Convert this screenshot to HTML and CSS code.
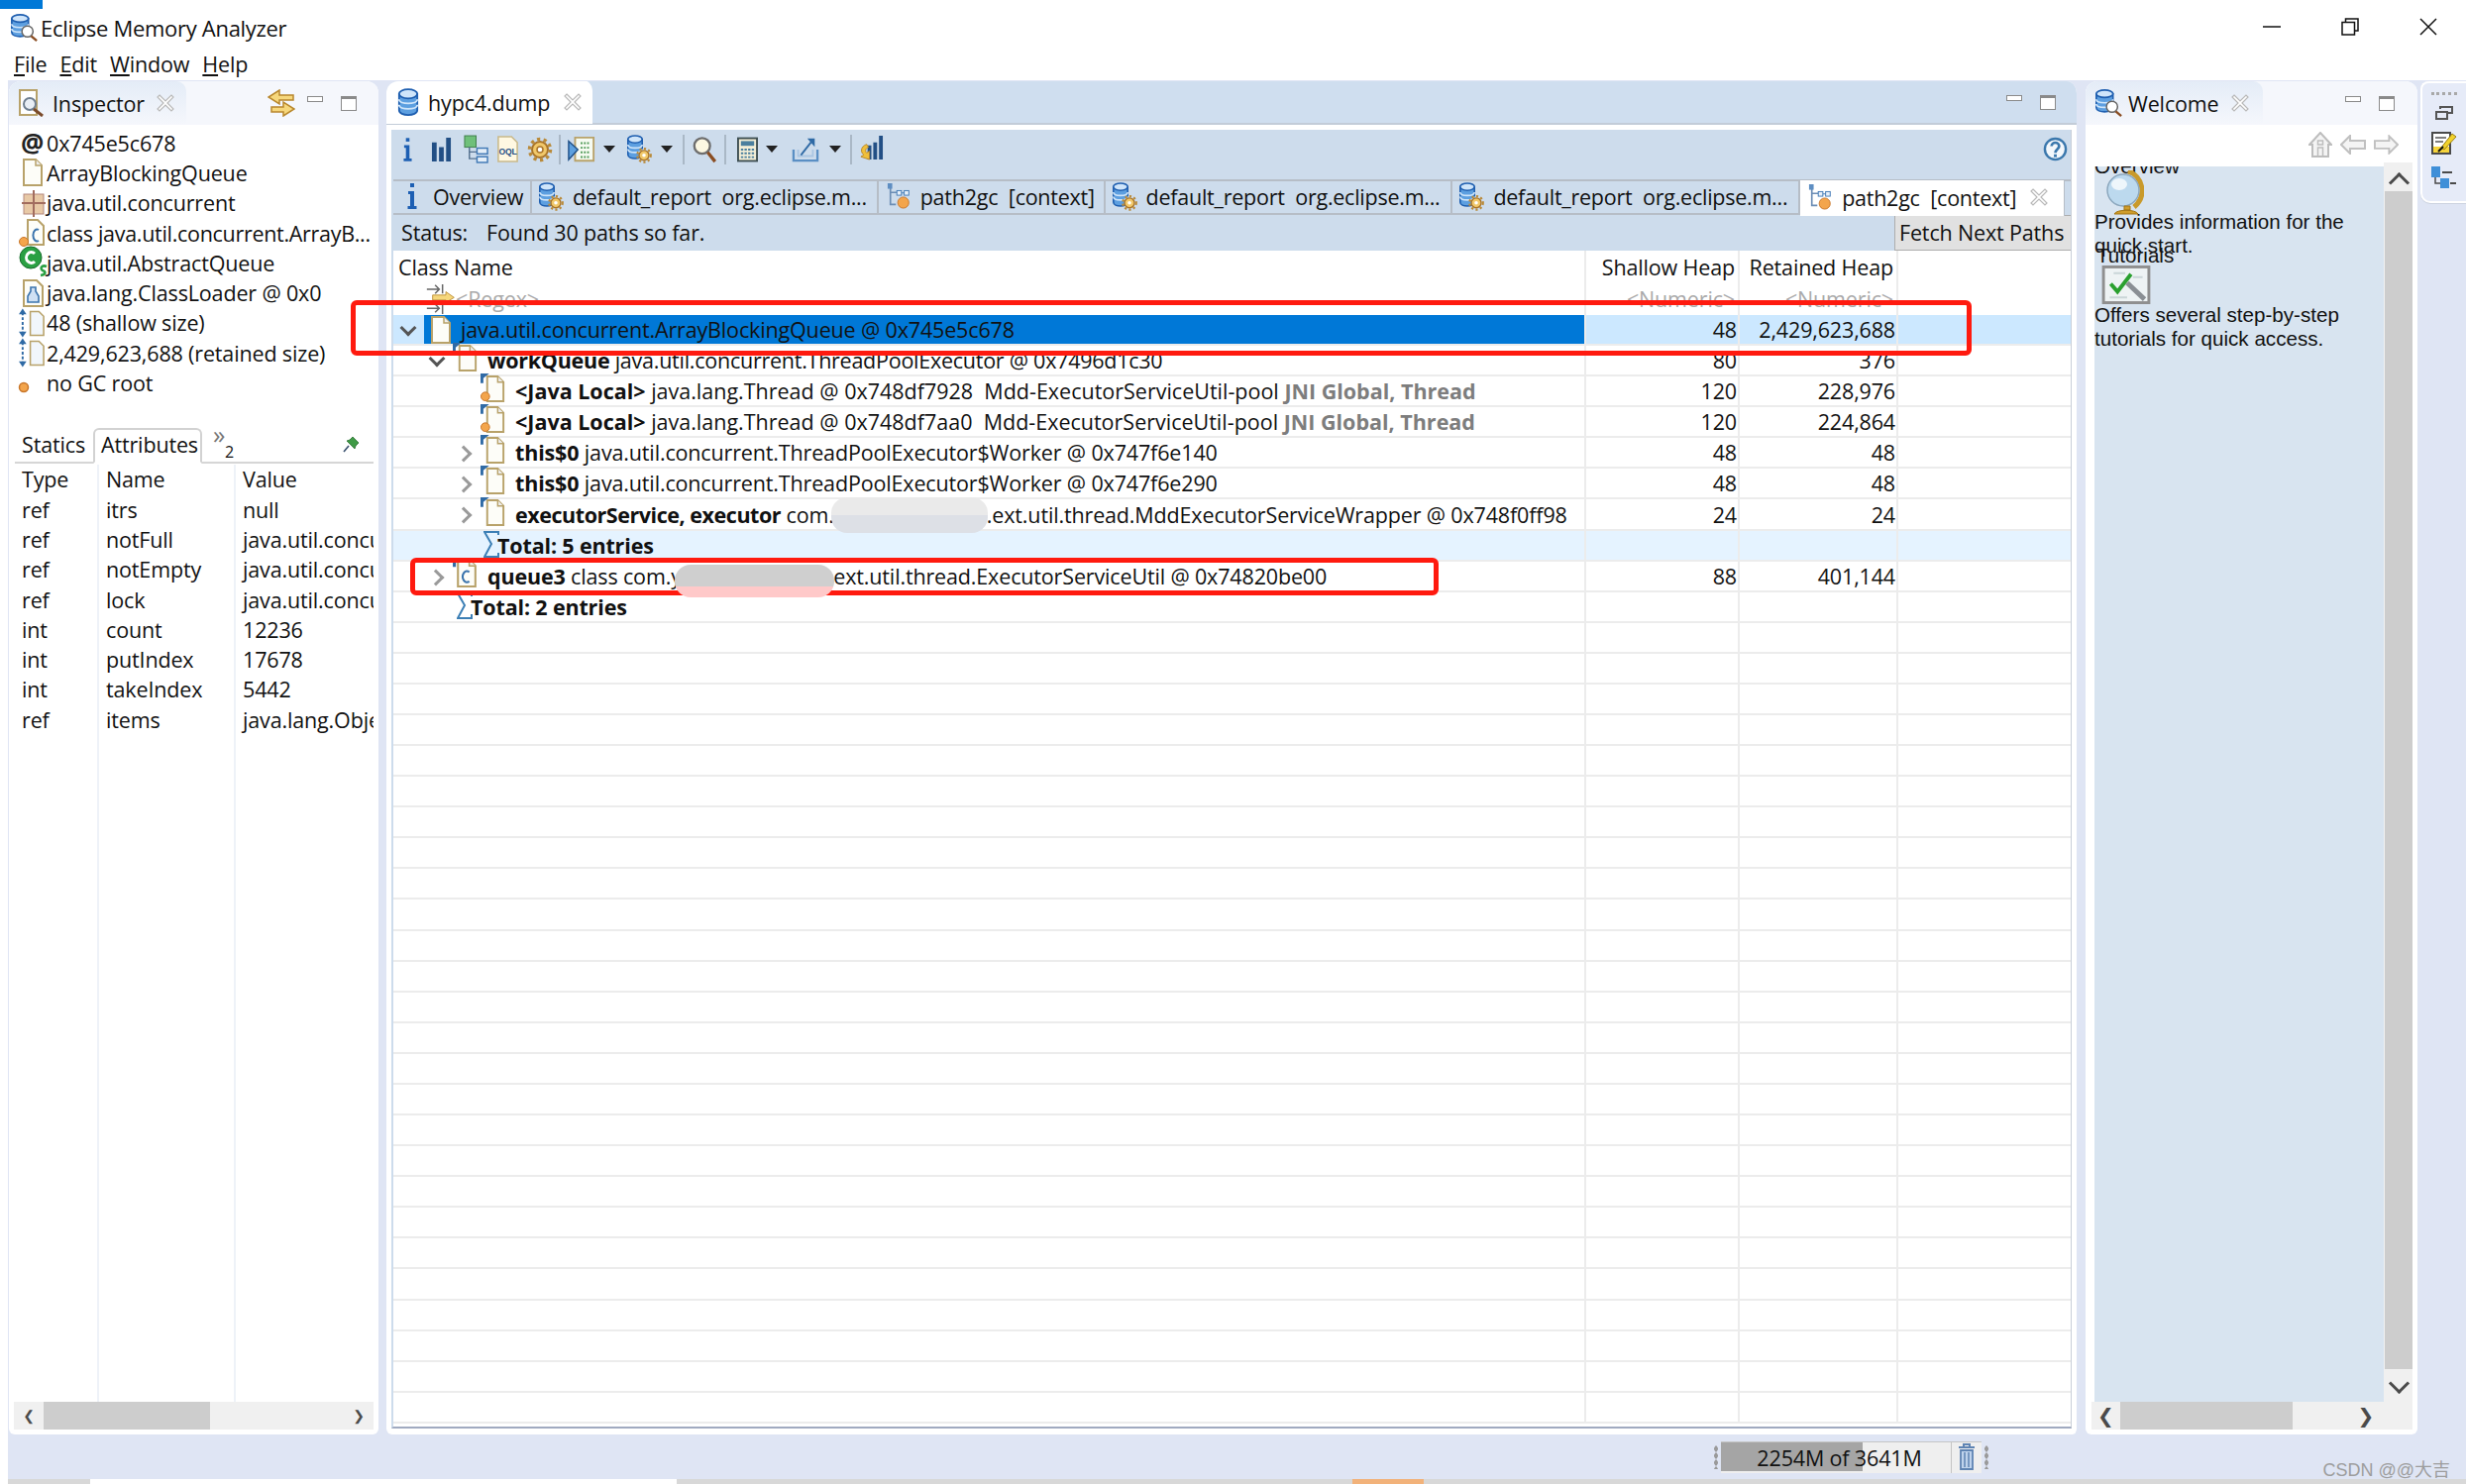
FILE: index.html
```html
<!DOCTYPE html>
<html lang="en">
<head>
<meta charset="utf-8">
<title>Eclipse Memory Analyzer</title>
<link rel="stylesheet" href="styles.css">
</head>
<body>
<svg class="defs" width="0" height="0">
  <symbol id="doc" viewBox="0 0 22 28"><path d="M2 1H14L20 7V27H2Z" fill="#fdfdf8" stroke="#b8a26a" stroke-width="2"/><path d="M14 1V7H20" fill="#eee" stroke="#b8a26a" stroke-width="1.5"/></symbol>
  <symbol id="doctag" viewBox="0 0 28 30"><path d="M7 3H18L24 9V29H7Z" fill="#fdfdf8" stroke="#b8a26a" stroke-width="2"/><path d="M18 3V9H24" fill="#eee" stroke="#b8a26a" stroke-width="1.5"/><path d="M0 0H9L3 5V10H0Z" fill="#2f6aa5"/></symbol>
  <symbol id="doclocal" viewBox="0 0 28 30"><path d="M7 3H18L24 9V29H7Z" fill="#fdfdf8" stroke="#b8a26a" stroke-width="2"/><path d="M18 3V9H24" fill="#eee" stroke="#b8a26a" stroke-width="1.5"/><path d="M0 0H9L3 5V10H0Z" fill="#2f6aa5"/><circle cx="5" cy="24" r="4.5" fill="#f3a54c" stroke="#c8762a"/></symbol>
  <symbol id="classdoc" viewBox="0 0 26 28"><path d="M5 1H16L22 7V27H5Z" fill="#fdfdf8" stroke="#b8a26a" stroke-width="2"/><path d="M16 1V7H22" fill="#eee" stroke="#b8a26a" stroke-width="1.5"/><path d="M0 0H8L3 4V8H0Z" fill="#2f6aa5"/><path d="M16 13A4 5.5 0 1 0 16 22" fill="none" stroke="#3b74ad" stroke-width="2"/></symbol>
  <symbol id="classstatic" viewBox="0 0 28 28"><path d="M9 1H19L25 7V26H9Z" fill="#fdfdf8" stroke="#b8a26a" stroke-width="2"/><path d="M20 11A4 6 0 1 0 20 22" fill="none" stroke="#3b74ad" stroke-width="2"/><circle cx="5" cy="23" r="4.5" fill="#f3a54c" stroke="#c8762a"/></symbol>
  <symbol id="pkg" viewBox="0 0 24 28"><rect x="2" y="5" width="20" height="20" fill="#e8c9a6" stroke="#b3877c"/><path d="M12 1V28M0 14H24" stroke="#a26d5f" stroke-width="2"/></symbol>
  <symbol id="greenc" viewBox="0 0 30 34"><circle cx="12" cy="12" r="11" fill="#2aa043" stroke="#166b2a"/><path d="M16 8A5 5.5 0 1 0 16 16" fill="none" stroke="#fff" stroke-width="3"/><path d="M28 21C23 19 21 23 24 25C27 26 28 29 22 30" fill="none" stroke="#2aa043" stroke-width="2.6"/></symbol>
  <symbol id="loader" viewBox="0 0 24 28"><path d="M2 1H15L21 7V27H2Z" fill="#fdfdf8" stroke="#b8a26a" stroke-width="2"/><path d="M9 8H14V12L17 17V23H6V17L9 12Z" fill="#cfe0f3" stroke="#3b74ad" stroke-width="1.6"/></symbol>
  <symbol id="size" viewBox="0 0 28 30"><path d="M4 4V26" stroke="#2f6aa5" stroke-width="2" stroke-dasharray="3 2"/><path d="M0 6L4 0L8 6ZM0 24L4 30L8 24Z" fill="#2f6aa5"/><path d="M12 3H21L26 8V28H12Z" fill="#f1f6fb" stroke="#b8a26a" stroke-width="1.6"/></symbol>
  <symbol id="dot" viewBox="0 0 12 12"><circle cx="6" cy="6" r="4.5" fill="#f3a54c" stroke="#c8762a" stroke-width="1.5"/></symbol>
  <symbol id="inspect" viewBox="0 0 26 28"><path d="M1 1H18V26H1Z" fill="#fff" stroke="#b8a26a" stroke-width="2"/><circle cx="11" cy="15" r="6" fill="#e8eef5" stroke="#6f7f90" stroke-width="2"/><path d="M15 20L24 27" stroke="#7a4a2a" stroke-width="3"/></symbol>
  <symbol id="closex" viewBox="0 0 18 18"><path d="M3 1L9 7L15 1L17 3L11 9L17 15L15 17L9 11L3 17L1 15L7 9L1 3Z" fill="#fff" stroke="#b9b9b9" stroke-width="1.2"/></symbol>
  <symbol id="swap" viewBox="0 0 28 28"><path d="M12 1V6H26V11H12V15L1 8Z" fill="#f6d77c" stroke="#b8872c" stroke-width="1.5"/><path d="M16 13V18H4V23H16V27L27 20Z" fill="#f6d77c" stroke="#b8872c" stroke-width="1.5"/></symbol>
  <symbol id="db" viewBox="0 0 24 30"><path d="M2 6V24C2 31 22 31 22 24V6Z" fill="#5d9fe0" stroke="#1f5fb0" stroke-width="2"/><ellipse cx="12" cy="6" rx="10" ry="5" fill="#cfe5fa" stroke="#1f5fb0" stroke-width="2"/><path d="M2 12C2 18 22 18 22 12M2 18C2 24 22 24 22 18" fill="none" stroke="#cfe5fa" stroke-width="2"/></symbol>
  <symbol id="gear" viewBox="0 0 26 26"><circle cx="13" cy="13" r="8" fill="#f1c86a" stroke="#a9742a" stroke-width="2"/><circle cx="13" cy="13" r="10.5" fill="none" stroke="#b98a3a" stroke-width="3.5" stroke-dasharray="3.2 3.4"/><circle cx="13" cy="13" r="3" fill="#fff" stroke="#a9742a" stroke-width="1.5"/></symbol>
  <symbol id="dbgear" viewBox="0 0 30 32"><path d="M2 5V22C2 28 18 28 18 22V5Z" fill="#5d9fe0" stroke="#1f5fb0" stroke-width="1.8"/><ellipse cx="10" cy="5" rx="8" ry="4" fill="#cfe5fa" stroke="#1f5fb0" stroke-width="1.8"/><path d="M2 11C2 16 18 16 18 11M2 16C2 21 18 21 18 16" fill="none" stroke="#cfe5fa" stroke-width="1.8"/><circle cx="20" cy="23" r="5.5" fill="#f1c86a" stroke="#a9742a" stroke-width="1.5"/><circle cx="20" cy="23" r="7.5" fill="none" stroke="#b98a3a" stroke-width="2.5" stroke-dasharray="2.4 2.6"/><circle cx="20" cy="23" r="2" fill="#fff"/></symbol>
  <symbol id="dbsearch" viewBox="0 0 30 30"><path d="M2 5V20C2 26 20 26 20 20V5Z" fill="#5d9fe0" stroke="#1f5fb0" stroke-width="1.8"/><ellipse cx="11" cy="5" rx="9" ry="4" fill="#cfe5fa" stroke="#1f5fb0" stroke-width="1.8"/><path d="M2 11C2 16 20 16 20 11M2 16C2 21 20 21 20 16" fill="none" stroke="#cfe5fa" stroke-width="1.8"/><circle cx="19" cy="19" r="6" fill="#fff" stroke="#666" stroke-width="1.6"/><path d="M23 24L29 29" stroke="#8a4d22" stroke-width="2.6"/></symbol>
  <symbol id="bars" viewBox="0 0 22 26"><path d="M1 6H6V26H1ZM8.500 11H13.500V26H8.500ZM16 1H21V26H16Z" fill="#224f85"/></symbol>
  <symbol id="domtree" viewBox="0 0 26 30"><rect x="1" y="1" width="12" height="12" fill="#6fc07a" stroke="#3e7d4a"/><path d="M6 13V25H14M6 18H14" fill="none" stroke="#54708f" stroke-width="1.5"/><rect x="14" y="14" width="11" height="6" fill="#e4eef8" stroke="#3f78b5" stroke-width="1.5"/><rect x="14" y="23" width="11" height="6" fill="#e4eef8" stroke="#3f78b5" stroke-width="1.5"/></symbol>
  <symbol id="oql" viewBox="0 0 24 28"><path d="M2 1H16L22 7V27H2Z" fill="#fff8e2" stroke="#c9b98a" stroke-width="1.6"/><text x="12" y="20" text-anchor="middle" font-family="Liberation Sans" font-size="9" font-weight="700" fill="#254f85">OQL</text></symbol>
  <symbol id="listrun" viewBox="0 0 30 30"><path d="M8 2H28V27H8Z" fill="#f6fbf2" stroke="#b8a26a" stroke-width="2"/><path d="M14 8H24M14 13H24M14 18H24M14 23H24" stroke="#4f9a56" stroke-width="2" stroke-dasharray="2 1.500"/><path d="M1 6L11 15L1 26Z" fill="#5ea1df" stroke="#1f4f85" stroke-width="1.5"/></symbol>
  <symbol id="search" viewBox="0 0 26 30"><circle cx="10" cy="11" r="8.500" fill="#fbf7e2" stroke="#6e6e6e" stroke-width="2.500"/><path d="M16 18L24 28" stroke="#8a4d22" stroke-width="3.500"/></symbol>
  <symbol id="calc" viewBox="0 0 22 26"><rect x="1" y="1" width="20" height="24" fill="#f4efd7" stroke="#3e4f52" stroke-width="2"/><rect x="4" y="4" width="14" height="5" fill="#4a7f9e"/><path d="M4 13H18M4 17H18M4 21H18" stroke="#4a7f9e" stroke-width="2" stroke-dasharray="2.500 1.300"/></symbol>
  <symbol id="export" viewBox="0 0 30 28"><path d="M2 14V26H28V14" fill="none" stroke="#5a8fc4" stroke-width="2.500"/><path d="M7 14V21H23V14" fill="none" stroke="#a9c5e2" stroke-width="2"/><path d="M10 20L21 6" stroke="#2f6aa5" stroke-width="2"/><path d="M17 2H25V11Z" fill="#2f6aa5"/></symbol>
  <symbol id="chartarrow" viewBox="0 0 26 30"><path d="M9 11H13V26H9ZM15 8H19V26H15ZM21 1H25V26H21Z" fill="#224f85"/><path d="M8 10C2 12 1 18 5 21L2 23L11 26L11 17L8 19C6 17 7 14 10 13Z" fill="#f0bf3a" stroke="#b8872c"/></symbol>
  <symbol id="help" viewBox="0 0 26 26"><circle cx="13" cy="13" r="11" fill="#f4f8fc" stroke="#3b78ad" stroke-width="2.500"/><path d="M9 10C9 5 17 5 17 10C17 13 13 13 13 17" fill="none" stroke="#3b78ad" stroke-width="2.800"/><rect x="11.500" y="18.500" width="3" height="3" fill="#3b78ad"/></symbol>
  <symbol id="infoi" viewBox="0 0 10 26"><rect x="3" y="0" width="4" height="4" fill="#1d5fb3"/><path d="M1 8H7V23H9.500V26H0.500V23H3V11H1Z" fill="#1d5fb3"/></symbol>
  <symbol id="pathtree" viewBox="0 0 28 30"><path d="M4 4V24H10M4 11H12" fill="none" stroke="#6b8db5" stroke-width="1.800"/><rect x="1" y="1" width="5" height="6" fill="#5e8ec2"/><rect x="11" y="9" width="5" height="5" fill="#e7f0fa" stroke="#3f78b5"/><rect x="19" y="9" width="5" height="5" fill="#e7f0fa" stroke="#3f78b5"/><path d="M16 11.500H19" stroke="#3f78b5"/><circle cx="18" cy="22" r="6" fill="#f3a54c" stroke="#c8762a"/></symbol>
  <symbol id="regex" viewBox="0 0 36 36"><path d="M1 6H16M11 1L16 6L11 11M20 0V11" fill="none" stroke="#666" stroke-width="1.800"/><path d="M8 13H24V9L34 16L24 22V19H8Z" fill="#f6d77c" stroke="#b8872c"/><path d="M1 29H16M11 24L16 29L11 34M20 23V36" fill="none" stroke="#666" stroke-width="1.800"/></symbol>
  <symbol id="sigma" viewBox="0 0 16 28"><path d="M15 4V1H1L8 13L1 26H15V22" fill="none" stroke="#3c7fb5" stroke-width="2"/></symbol>
  <symbol id="pin" viewBox="0 0 16 16"><path d="M7 3L10 0L16 6L13 9L12 12L4 4Z" fill="#3f9a46" stroke="#2a6f30" stroke-width="0.800"/><path d="M6 9L1 15" stroke="#39506e" stroke-width="1.600"/></symbol>
  <symbol id="globe" viewBox="0 0 38 46"><path d="M22 1C36 5 42 25 28 37" fill="none" stroke="#c99a2b" stroke-width="5"/><circle cx="17" cy="20" r="16" fill="#bcd9ee" stroke="#8ba7bd" stroke-width="1.500"/><ellipse cx="13" cy="14" rx="8" ry="6" fill="#eef6fb"/><path d="M18 36H24V40H18ZM8 44C10 39 30 39 32 44Z" fill="#cf9d2c" stroke="#a37716"/></symbol>
  <symbol id="tutorial" viewBox="0 0 50 40"><rect x="1.500" y="1.500" width="47" height="37" fill="#eef3f4" stroke="#8f8f8f" stroke-width="3"/><path d="M9 19L16 27L30 9" fill="none" stroke="#2aa02f" stroke-width="4"/><path d="M26 18L44 35" stroke="#8a8f94" stroke-width="5"/><path d="M12 8H24M32 12H42M8 33H26" stroke="#cad6d8" stroke-width="2"/></symbol>
  <symbol id="home" viewBox="0 0 24 26"><path d="M1 13L12 1L23 13H20V25H4V13Z" fill="#f4f4f4" stroke="#bdbdbd" stroke-width="2"/><rect x="9.500" y="9" width="5" height="4" fill="none" stroke="#bdbdbd" stroke-width="1.500"/><rect x="9.500" y="16" width="5" height="9" fill="none" stroke="#bdbdbd" stroke-width="1.500"/></symbol>
  <symbol id="back" viewBox="0 0 26 20"><path d="M10 1L1 10L10 19V14H25V6H10Z" fill="#f4f4f4" stroke="#c0c0c0" stroke-width="2"/></symbol>
  <symbol id="fwd" viewBox="0 0 26 20"><path d="M16 1L25 10L16 19V14H1V6H16Z" fill="#f4f4f4" stroke="#c0c0c0" stroke-width="2"/></symbol>
  <symbol id="restoreview" viewBox="0 0 18 14"><path d="M5 3V1H17V7H12M1 6H12V13H1Z" fill="none" stroke="#555" stroke-width="2"/></symbol>
  <symbol id="editpin" viewBox="0 0 26 24"><rect x="1" y="2" width="18" height="21" fill="#fff" stroke="#4a4a4a" stroke-width="2"/><rect x="2" y="16" width="16" height="6" fill="#f6d43c"/><path d="M4 7H15M4 11H12" stroke="#555" stroke-width="1.500"/><path d="M10 17L21 3L25 6L13 19Z" fill="#f2d22c" stroke="#9c7f10"/><path d="M7 21L12 16" stroke="#111" stroke-width="2"/></symbol>
  <symbol id="treeview" viewBox="0 0 26 24"><rect x="0" y="1" width="9" height="11" fill="#3f8fd8"/><rect x="9" y="13" width="9" height="10" fill="#3f8fd8"/><path d="M4 12V18H9" fill="none" stroke="#4a4a4a" stroke-width="1.500"/><path d="M11 7H21M19 18H25" stroke="#4a4a4a" stroke-width="2"/></symbol>
  <symbol id="trash" viewBox="0 0 18 28"><path d="M1 4H17M6 3V1H12V3" fill="none" stroke="#5f84b3" stroke-width="2"/><path d="M3 7H15V26H3Z" fill="#bfd3ec" stroke="#5f84b3" stroke-width="1.800"/><path d="M7 9V24M11 9V24" stroke="#5f84b3" stroke-width="1.500"/></symbol>
</svg>

<div class="app">
  <header class="titlebar">
    <svg class="t-icon" width="28" height="28"><use href="#dbsearch"/></svg>
    <span class="t-text">Eclipse Memory Analyzer</span>
    <div class="winctl">
      <svg width="18" height="18" viewBox="0 0 18 18"><path d="M0 9H18" stroke="#111" stroke-width="1.500"/></svg>
      <svg width="18" height="18" viewBox="0 0 18 18"><path d="M4.500 4V1H17V13H13.500M1 4.500H13.500V17H1Z" fill="none" stroke="#111" stroke-width="1.500"/></svg>
      <svg width="18" height="18" viewBox="0 0 18 18"><path d="M1 1L17 17M17 1L1 17" stroke="#111" stroke-width="1.500"/></svg>
    </div>
  </header>
  <nav class="menubar"><span><u>F</u>ile</span><span><u>E</u>dit</span><span><u>W</u>indow</span><span><u>H</u>elp</span></nav>

  <div class="work">
    <div class="panes">
      <section class="panel p-left">
        <div class="viewtabs">
          <div class="viewtab light"><svg width="26" height="28"><use href="#inspect"/></svg><span>Inspector</span><svg class="x" width="18" height="18"><use href="#closex"/></svg></div>
          <svg class="swap" width="28" height="28"><use href="#swap"/></svg>
          <div class="minmax"><i class="min"></i><i class="max"></i></div>
        </div>
        <ul class="facts">
          <li><b class="at">@</b>0x745e5c678</li>
          <li><svg width="22" height="28"><use href="#doc"/></svg>ArrayBlockingQueue</li>
          <li><svg width="24" height="28"><use href="#pkg"/></svg>java.util.concurrent</li>
          <li class="tight"><svg width="28" height="28"><use href="#classstatic"/></svg>class java.util.concurrent.ArrayB...</li>
          <li><svg width="30" height="34"><use href="#greenc"/></svg>java.util.AbstractQueue</li>
          <li><svg width="24" height="28"><use href="#loader"/></svg>java.lang.ClassLoader @ 0x0</li>
          <li><svg width="27" height="30"><use href="#size"/></svg>48 (shallow size)</li>
          <li><svg width="27" height="30"><use href="#size"/></svg>2,429,623,688 (retained size)</li>
          <li><svg class="dot" width="12" height="12"><use href="#dot"/></svg>no GC root</li>
        </ul>
        <div class="subtabs">
          <span class="sub">Statics</span><span class="sub active">Attributes</span>
          <span class="more"><span class="chev">&raquo;</span><span class="n">2</span></span>
          <svg class="pin" width="16" height="16"><use href="#pin"/></svg>
        </div>
        <div class="attrs">
          <div class="a-row a-head"><span>Type</span><span>Name</span><span>Value</span></div>
          <div class="a-row"><span>ref</span><span>itrs</span><span>null</span></div>
          <div class="a-row"><span>ref</span><span>notFull</span><span>java.util.concurrent.locks</span></div>
          <div class="a-row"><span>ref</span><span>notEmpty</span><span>java.util.concurrent.locks</span></div>
          <div class="a-row"><span>ref</span><span>lock</span><span>java.util.concurrent.locks</span></div>
          <div class="a-row"><span>int</span><span>count</span><span>12236</span></div>
          <div class="a-row"><span>int</span><span>putIndex</span><span>17678</span></div>
          <div class="a-row"><span>int</span><span>takeIndex</span><span>5442</span></div>
          <div class="a-row"><span>ref</span><span>items</span><span>java.lang.Object[]</span></div>
          <div class="a-fill"><span></span><span></span><span></span></div>
        </div>
        <div class="hscroll"><span class="arr">&#10094;</span><span class="thumb"></span><span class="arr end">&#10095;</span></div>
      </section>

      <section class="panel p-mid">
        <div class="edtabs">
          <div class="edtab"><svg width="22" height="28"><use href="#db"/></svg><span>hypc4.dump</span><svg class="x" width="18" height="18"><use href="#closex"/></svg></div>
          <div class="minmax"><i class="min"></i><i class="max"></i></div>
        </div>
        <div class="editor">
          <div class="toolbar">
            <svg width="9" height="24"><use href="#infoi"/></svg>
            <svg class="g1" width="21" height="25"><use href="#bars"/></svg>
            <svg class="g1" width="25" height="29"><use href="#domtree"/></svg>
            <svg class="g2" width="23" height="27"><use href="#oql"/></svg>
            <svg class="g2" width="26" height="26"><use href="#gear"/></svg>
            <i class="sep"></i>
            <svg class="g3" width="28" height="28"><use href="#listrun"/></svg><i class="dd"></i>
            <svg class="g4" width="27" height="29"><use href="#dbgear"/></svg><i class="dd"></i>
            <i class="sep s2"></i>
            <svg class="g7" width="25" height="28"><use href="#search"/></svg>
            <i class="sep s3"></i>
            <svg class="g5" width="21" height="26"><use href="#calc"/></svg><i class="dd"></i>
            <svg class="g6" width="28" height="26"><use href="#export"/></svg><i class="dd dd-wide"></i>
            <i class="sep s4"></i>
            <svg class="g3" width="25" height="29"><use href="#chartarrow"/></svg>
            <svg class="help" width="25" height="25"><use href="#help"/></svg>
          </div>
          <div class="pagetabs">
            <div class="pt t-over"><svg width="10" height="26"><use href="#infoi"/></svg><span>Overview</span></div>
            <div class="pt t-rep"><svg width="27" height="29"><use href="#dbgear"/></svg><span>default_report &nbsp;org.eclipse.m...</span></div>
            <div class="pt t-path"><svg width="26" height="28"><use href="#pathtree"/></svg><span>path2gc &nbsp;[context]</span></div>
            <div class="pt t-rep"><svg width="27" height="29"><use href="#dbgear"/></svg><span>default_report &nbsp;org.eclipse.m...</span></div>
            <div class="pt t-rep"><svg width="27" height="29"><use href="#dbgear"/></svg><span>default_report &nbsp;org.eclipse.m...</span></div>
            <div class="pt t-active"><svg width="26" height="28"><use href="#pathtree"/></svg><span>path2gc &nbsp;[context]</span><svg class="x" width="18" height="18"><use href="#closex"/></svg></div>
          </div>
          <div class="statusrow"><span class="st">Status:</span><span>Found 30 paths so far.</span><button class="fetch" type="button">Fetch Next Paths</button></div>
          <div class="table">
            <div class="t-head">
              <div class="th-name"><span>Class Name</span><span class="flt"><svg width="30" height="30"><use href="#regex"/></svg>&lt;Regex&gt;</span></div>
              <div class="th-num"><span>Shallow Heap</span><span class="flt">&lt;Numeric&gt;</span></div>
              <div class="th-num"><span>Retained Heap</span><span class="flt">&lt;Numeric&gt;</span></div>
              <div></div>
            </div>
            <div class="row selrow">
              <div class="nm lv0"><span class="ar down"></span><div class="body sel"><svg class="ic" width="22" height="28"><use href="#doc"/></svg><span>java.util.concurrent.ArrayBlockingQueue @ 0x745e5c678</span></div></div>
              <div class="num">48</div><div class="num">2,429,623,688</div><div></div>
            </div>
            <div class="row">
              <div class="nm lv1 narrow"><span class="ar down"></span><div class="body"><svg class="ic tagged" width="27" height="29"><use href="#doctag"/></svg><span><b>workQueue</b> java.util.concurrent.ThreadPoolExecutor @ 0x7496d1c30</span></div></div>
              <div class="num">80</div><div class="num">376</div><div></div>
            </div>
            <div class="row">
              <div class="nm lv2 loose"><span class="ar"></span><div class="body"><svg class="ic tagged" width="27" height="29"><use href="#doclocal"/></svg><span><b>&lt;Java Local&gt;</b> java.lang.Thread @ 0x748df7928&nbsp; Mdd-ExecutorServiceUtil-pool <b class="gr">JNI Global, Thread</b></span></div></div>
              <div class="num">120</div><div class="num">228,976</div><div></div>
            </div>
            <div class="row">
              <div class="nm lv2 loose"><span class="ar"></span><div class="body"><svg class="ic tagged" width="27" height="29"><use href="#doclocal"/></svg><span><b>&lt;Java Local&gt;</b> java.lang.Thread @ 0x748df7aa0&nbsp; Mdd-ExecutorServiceUtil-pool <b class="gr">JNI Global, Thread</b></span></div></div>
              <div class="num">120</div><div class="num">224,864</div><div></div>
            </div>
            <div class="row">
              <div class="nm lv2"><span class="ar closed"></span><div class="body"><svg class="ic tagged" width="27" height="29"><use href="#doctag"/></svg><span><b>this$0</b> java.util.concurrent.ThreadPoolExecutor$Worker @ 0x747f6e140</span></div></div>
              <div class="num">48</div><div class="num">48</div><div></div>
            </div>
            <div class="row">
              <div class="nm lv2"><span class="ar closed"></span><div class="body"><svg class="ic tagged" width="27" height="29"><use href="#doctag"/></svg><span><b>this$0</b> java.util.concurrent.ThreadPoolExecutor$Worker @ 0x747f6e290</span></div></div>
              <div class="num">48</div><div class="num">48</div><div></div>
            </div>
            <div class="row">
              <div class="nm lv2"><span class="ar closed"></span><div class="body"><svg class="ic tagged" width="27" height="29"><use href="#doctag"/></svg><span><b class="tightb">executorService, executor</b> com.<span class="gap"></span>.ext.util.thread.MddExecutorServiceWrapper @ 0x748f0ff98</span></div></div>
              <div class="num">24</div><div class="num">24</div><div></div>
            </div>
            <div class="row totalrow">
              <div class="nm tot2"><svg width="16" height="28"><use href="#sigma"/></svg><b>Total: 5 entries</b></div>
              <div class="num"></div><div class="num"></div><div></div>
            </div>
            <div class="row">
              <div class="nm lv1"><span class="ar closed"></span><div class="body"><svg class="ic tagged" width="27" height="29"><use href="#classdoc"/></svg><span><b>queue3</b> class com.y<span class="gap g-b"></span>.ext.util.thread.ExecutorServiceUtil @ 0x74820be00</span></div></div>
              <div class="num">88</div><div class="num">401,144</div><div></div>
            </div>
            <div class="row">
              <div class="nm tot1"><svg width="16" height="28"><use href="#sigma"/></svg><b>Total: 2 entries</b></div>
              <div class="num"></div><div class="num"></div><div></div>
            </div>
            <div class="row"><div></div><div></div><div></div><div></div></div><div class="row"><div></div><div></div><div></div><div></div></div><div class="row"><div></div><div></div><div></div><div></div></div><div class="row"><div></div><div></div><div></div><div></div></div><div class="row"><div></div><div></div><div></div><div></div></div>
            <div class="row"><div></div><div></div><div></div><div></div></div><div class="row"><div></div><div></div><div></div><div></div></div><div class="row"><div></div><div></div><div></div><div></div></div><div class="row"><div></div><div></div><div></div><div></div></div><div class="row"><div></div><div></div><div></div><div></div></div>
            <div class="row"><div></div><div></div><div></div><div></div></div><div class="row"><div></div><div></div><div></div><div></div></div><div class="row"><div></div><div></div><div></div><div></div></div><div class="row"><div></div><div></div><div></div><div></div></div><div class="row"><div></div><div></div><div></div><div></div></div>
            <div class="row"><div></div><div></div><div></div><div></div></div><div class="row"><div></div><div></div><div></div><div></div></div><div class="row"><div></div><div></div><div></div><div></div></div><div class="row"><div></div><div></div><div></div><div></div></div><div class="row"><div></div><div></div><div></div><div></div></div>
            <div class="row"><div></div><div></div><div></div><div></div></div><div class="row"><div></div><div></div><div></div><div></div></div><div class="row"><div></div><div></div><div></div><div></div></div><div class="row"><div></div><div></div><div></div><div></div></div><div class="row"><div></div><div></div><div></div><div></div></div>
            <div class="row"><div></div><div></div><div></div><div></div></div>
          </div>
        </div>
      </section>

      <section class="panel p-right">
        <div class="viewtabs welcome-tabs">
          <div class="viewtab wtab"><svg width="28" height="28"><use href="#dbsearch"/></svg><span>Welcome</span><svg class="x" width="18" height="18"><use href="#closex"/></svg></div>
          <div class="minmax"><i class="min"></i><i class="max"></i></div>
        </div>
        <div class="nav-icons">
          <svg width="24" height="26"><use href="#home"/></svg>
          <svg width="26" height="20"><use href="#back"/></svg>
          <svg width="25" height="20"><use href="#fwd"/></svg>
        </div>
        <div class="w-body">
          <div class="w-content">
            <div class="w-title clipped">Overview</div>
            <svg class="w-globe" width="38" height="46"><use href="#globe"/></svg>
            <p class="w-p">Provides information for the<br>quick start.</p>
            <div class="w-title tut">Tutorials</div>
            <svg class="w-tut" width="50" height="39"><use href="#tutorial"/></svg>
            <p class="w-p w-p2">Offers several step-by-step<br>tutorials for quick access.</p>
          </div>
          <div class="vscroll"><span class="v-up"></span><span class="v-thumb"></span><span class="v-down"></span></div>
        </div>
        <div class="hscroll h-right"><span class="arr big">&#10094;</span><span class="thumb"></span><span class="arr big end">&#10095;</span></div>
      </section>

      <aside class="trim">
        <span class="dots"></span>
        <svg width="18" height="14"><use href="#restoreview"/></svg>
        <svg width="26" height="24"><use href="#editpin"/></svg>
        <svg width="26" height="24"><use href="#treeview"/></svg>
      </aside>
    </div>
    <footer class="statusbar">
      <i class="grip"></i>
      <div class="heap"><span class="h-bar"><span class="h-used"></span><span class="h-text">2254M of 3641M</span></span><span class="h-gc"><svg width="18" height="28"><use href="#trash"/></svg></span></div>
      <i class="grip"></i>
      <span class="mark">CSDN @@大吉</span>
    </footer>
  </div>
  <div class="strip"><span class="s-white"></span><span class="s-orange"></span></div>
</div>

<div class="redbox rb1"></div>
<div class="redbox rb2"></div>
<div class="blur b1"></div>
<div class="blur b2"></div>
</body>
</html>
```

FILE: styles.css
```css
* { box-sizing: border-box; }
html, body { margin: 0; padding: 0; }
body {
  width: 2489px; height: 1498px; overflow: hidden; position: relative; background: #fff;
  font-family: "Open Sans", "Noto Sans", sans-serif; font-size: 21.5px; letter-spacing: -0.15px; color: #111;
}
svg { display: block; flex: none; overflow: visible; }
.defs { position: absolute; }
.app { display: flex; flex-direction: column; height: 1498px; }

.titlebar { height: 50px; display: flex; align-items: center; padding: 6px 29px 0 10px; flex: none; position: relative; }
.titlebar::before { content: ""; position: absolute; left: 0; top: 0; width: 43px; height: 9px; background: #0078d7; }
.t-text { margin-left: 3px; font-size: 22px; letter-spacing: -0.3px; }
.winctl { margin-left: auto; display: flex; gap: 61px; }
.winctl svg { margin-top: -2px; }
.menubar { height: 31px; display: flex; gap: 13px; padding: 0 0 3px 14px; align-items: center; flex: none; }

.work { flex: 1; margin-left: 8px; background: #dfe5f4; display: flex; flex-direction: column; }
.panes { height: 1367px; display: flex; padding-top: 1px; flex: none; }
.panel { background: #fff; border-radius: 12px 12px 6px 6px; display: flex; flex-direction: column; overflow: hidden; }
.p-left { width: 373px; margin-left: 1px; }
.p-mid { width: 1708px; margin-left: 8px; background: #fff; border-right: 2px solid #dfe5f4; }
.p-right { width: 335px; margin-left: 7px; }

.viewtabs { height: 44px; display: flex; align-items: center; background: #f5f7fc; flex: none; }
.viewtab { height: 44px; display: flex; align-items: center; padding: 0 13px 0 10px; border-radius: 10px 10px 0 0; background: linear-gradient(#e4ecf7, #f5f7fc); width: 179px; }
.viewtab > span { margin-left: 8px; }
.viewtab .x { margin-left: 12px; }
.swap { margin-left: 82px; }
.minmax { display: flex; gap: 18px; margin-left: 12px; }
.min { width: 16px; height: 6px; border: 1px solid #8a8a8a; background: #fff; }
.max { width: 16px; height: 15px; border: 1px solid #8a8a8a; border-top-width: 3px; background: #fff; }

.facts { list-style: none; margin: 3px 0 0; padding: 0; flex: none; }
.facts li { height: 30.3px; display: flex; align-items: center; position: relative; padding-left: 38px; white-space: nowrap; }
.facts li.tight { letter-spacing: -0.3px; }
.facts li svg, .at { position: absolute; left: 10px; top: 50%; transform: translateY(-50%); }
.facts li svg[width="22"], .facts li svg[width="24"] { left: 13px; }
.facts li .dot { left: 9px; top: 20px; }
.at { font-size: 26px; left: 12px; color: #222; }

.subtabs { margin: 30px 5px 0 6px; height: 36px; display: flex; align-items: flex-end; border-bottom: 2px solid #d6d6d6; position: relative; flex: none; }
.sub { padding: 0 8px 3px 7px; }
.sub.active { border: 2px solid #d2d2d2; border-bottom: 2px solid #fff; margin-bottom: -2px; border-radius: 6px 6px 0 0; padding: 0 5px 3px 6px; width: 110px; }
.more { margin-left: 11px; position: relative; width: 22px; height: 30px; }
.chev { position: absolute; left: 0; top: -15px; font-size: 25px; color: #777; }
.n { position: absolute; left: 12px; top: 9px; font-size: 16px; }
.pin { position: absolute; right: 15px; top: 9px; }

.attrs { flex: 1; display: flex; flex-direction: column; margin: 0 5px 0 6px; overflow: hidden; }
.a-row { height: 30.3px; display: grid; grid-template-columns: 85px 138px 1fr; align-items: center; flex: none; }
.a-head { margin-top: 1px; }
.a-row span { padding-left: 7px; white-space: nowrap; overflow: hidden; height: 100%; display: flex; align-items: center; border-right: 2px solid #eef2f8; }
.a-row span:last-child { border-right: 0; }
.a-fill { flex: 1; display: grid; grid-template-columns: 85px 138px 1fr; }
.a-fill span { border-right: 2px solid #eef2f8; }
.a-fill span:last-child { border-right: 0; }

.hscroll { height: 28px; margin: 0 5px 5px 5px; background: #f0f0f0; display: flex; align-items: center; flex: none; }
.arr { width: 30px; text-align: center; color: #4a4a4a; font-size: 14px; letter-spacing: 0; font-family: "DejaVu Sans", sans-serif; }
.hscroll .thumb { width: 168px; height: 28px; background: #cdcdcd; }
.arr.end { margin-left: auto; }

.edtabs { height: 44px; background: #cfdeef; display: flex; align-items: center; border-bottom: 2px solid #c3ccd8; flex: none; }
.edtab { height: 44px; width: 208px; background: #fff; display: flex; align-items: center; padding-left: 11px; border-radius: 10px 10px 0 0; }
.edtab > span { margin-left: 9px; }
.edtab .x { margin-left: 14px; }
.edtabs .minmax { margin-left: auto; margin-right: 21px; }
.editor { flex: 1; margin: 5px 5px 6px 5px; border-bottom: 2px solid #a0aac0; border-right: 1px solid #c9ced8; display: flex; flex-direction: column; overflow: hidden; border-left: 2px solid #cddcec; }

.toolbar { height: 50px; background: #cddcec; display: flex; align-items: center; padding: 0 0 11px 10px; flex: none; }
.g1 { margin-left: 19px; }
.toolbar .g1 + .g1 { margin-left: 12px; }
.g2 { margin-left: 8px; }
.sep { width: 2px; height: 30px; background: #aab8c6; margin-left: 6px; }
.s2 { margin-left: 10px; } .s3 { margin-left: 7px; } .s4 { margin-left: 9px; }
.g3 { margin-left: 7px; }
.g4 { margin-left: 11px; }
.g5 { margin-left: 11px; }
.g6 { margin-left: 14px; }
.g7 { margin-left: 8px; }
.dd { width: 0; height: 0; border-left: 6px solid transparent; border-right: 6px solid transparent; border-top: 7px solid #222; margin-left: 8px; }
.dd-wide { margin-left: 10px; }
.help { margin-left: auto; margin-right: 3px; }

.pagetabs { height: 36px; background: #cddcec; display: flex; align-items: center; border-top: 2px solid #b6bdc6; flex: none; position: relative; padding-right: 6px; letter-spacing: -0.25px; }
.pt { height: 34px; display: flex; align-items: center; border-right: 2px solid #b6bdc6; border-bottom: 2px solid #b6bdc6; white-space: nowrap; padding-bottom: 2px; }
.pt span { margin-left: 8px; }
.t-over { width: 140px; padding-left: 14px; }
.t-over span { margin-left: 16px; }
.t-rep { width: 350px; padding-left: 6px; }
.t-path { width: 229px; padding-left: 8px; }
.t-active { width: 267px; padding-left: 8px; background: #fff; border: 0; border-right: 1px solid #b6bdc6; height: 36px; }
.t-active .x { margin-left: 14px; }
.pagetabs .t-rep:nth-child(4), .pagetabs .t-rep:nth-child(5) { width: 351px; }

.statusrow { height: 36px; background: #cddcec; display: flex; align-items: center; padding-left: 8px; flex: none; }
.statusrow > span { padding-bottom: 2px; }
.st { margin-right: 19px; }
.fetch { margin-left: auto; height: 36px; width: 178px; background: #e1e1e1; border: 1px solid #adadad; border-right: 0; font: inherit; letter-spacing: inherit; color: #111; padding: 0 0 2px 4px; text-align: left; white-space: nowrap; overflow: hidden; }

.table { flex: 1; overflow: hidden; background: #fff; }
.t-head { height: 65px; display: grid; grid-template-columns: 1204px 155px 160px 1fr; }
.th-name, .th-num { display: flex; flex-direction: column; border-right: 2px solid #ececec; padding-top: 1px; line-height: 31px; }
.th-name { padding-left: 5px; }
.th-num { align-items: flex-end; padding-right: 3px; white-space: nowrap; }
.flt { color: #aaa; display: flex; align-items: center; margin-top: 1px; }
.th-name .flt { padding-left: 28px; }
.row { height: 31.08px; display: grid; grid-template-columns: 1204px 155px 160px 1fr; border-bottom: 2px solid #ececec; }
.row > div { border-right: 2px solid #ececec; }
.row > div:last-child { border-right: 0; }
.nm { display: flex; align-items: center; white-space: nowrap; min-width: 0; }
.lv0 { padding-left: 6px; } .lv1 { padding-left: 35px; } .lv2 { padding-left: 63px; }
.loose { letter-spacing: 0; }
.narrow { letter-spacing: -0.25px; }
.tightb { letter-spacing: -0.45px; }
.ar { width: 25px; height: 100%; flex: none; position: relative; }
.ar.down::after, .ar.closed::after { content: ""; position: absolute; width: 9px; height: 9px; border-right: 3px solid #555; border-bottom: 3px solid #555; }
.ar.down::after { left: 3px; top: 7px; transform: rotate(45deg); }
.ar.closed::after { left: 2px; top: 10px; transform: rotate(-45deg); border-color: #9a9a9a; }
.body { display: flex; align-items: center; flex: 1; height: 100%; min-width: 0; }
.ic { margin-left: 6px; margin-right: 9px; }
.ic.tagged { margin-left: 0; margin-right: 8px; margin-top: -6px; }
.sel { background: #0078d7; color: #111; }
.selrow { background: #cce8ff; }
.totalrow { background: #e5f3ff; }
.num { display: flex; align-items: center; justify-content: flex-end; padding-right: 1px; }
.gr { color: #7d7d7d; }
.gap { display: inline-block; width: 154px; height: 1px; }
.g-b { width: 148px; }
.tot2 { padding-left: 91px; }
.tot1 { padding-left: 64px; }
.tot1 svg, .tot2 svg { margin-right: -2px; }

.welcome-tabs { background: #f5f7fc; }
.wtab { width: 179px; padding-left: 9px; }
.wtab > span { margin-left: 6px; }
.welcome-tabs .minmax { margin-left: auto; margin-right: 23px; }
.nav-icons { height: 37px; display: flex; align-items: center; gap: 8px; justify-content: flex-end; padding-right: 19px; flex: none; margin-top: 1px; }
.w-body { flex: 1; display: flex; min-height: 0; margin-left: 9px; margin-right: 5px; }
.w-content { flex: 1; background: #d8e4f0; overflow: hidden; font-family: "Liberation Sans", sans-serif; font-size: 20.6px; letter-spacing: 0; line-height: 24px; position: relative; margin-top: 4px; }
.w-title { height: 24px; }
.clipped { margin-top: -12px; }
.w-globe { margin: -8px 0 0 12px; }
.w-p { margin: -6px 0 0 0; white-space: nowrap; }
.w-p2 { margin-top: -1px; }
.tut { margin: -14px 0 0 2px; position: relative; }
.w-tut { margin: -2px 0 0 7px; }
.vscroll { width: 29px; background: #f0f0f0; display: flex; flex-direction: column; align-items: center; flex: none; }
.v-up, .v-down { height: 29px; width: 29px; position: relative; flex: none; }
.v-up::after, .v-down::after { content: ""; position: absolute; left: 8px; width: 12px; height: 12px; border-left: 3px solid #4a4a4a; border-top: 3px solid #4a4a4a; transform: rotate(45deg); top: 13px; }
.v-down::after { transform: rotate(225deg); top: 3px; }
.v-thumb { flex: 1; width: 28px; background: #cdcdcd; max-height: 1189px; }
.v-down { margin-top: auto; }
.h-right { margin: 0 5px 5px 6px; }
.h-right .arr { width: 29px; }
.big { font-size: 20px; }
.h-right .thumb { width: 174px; }
.h-right .arr.end { margin-left: 57px; width: 34px; }

.trim { width: 46px; height: 123px; margin-left: 3px; background: #e6ebf8; border: 2px solid #fff; border-right: 0; border-radius: 8px 0 0 10px; display: flex; flex-direction: column; align-items: center; padding-top: 9px; gap: 11px; box-shadow: 0 1px 0 #ccd2df; }
.dots { width: 26px; height: 0; border-top: 3px dotted #a8a8a8; }

.statusbar { height: 45px; display: flex; align-items: center; position: relative; padding-left: 1722px; gap: 3px; flex: none; }
.grip { width: 4px; height: 24px; background-image: radial-gradient(#9a9a9a 1.5px, transparent 2px); background-size: 4px 7px; }
.heap { width: 263px; height: 32px; display: flex; background: #fff; border-top: 1px solid #c5c5c5; }
.h-bar { width: 232px; position: relative; background: #efefef; display: flex; align-items: center; justify-content: center; }
.h-used { position: absolute; left: 0; top: 0; bottom: 2px; width: 143px; background: #a5a5a5; }
.h-text { position: relative; margin-left: 7px; }
.h-gc { flex: 1; display: flex; align-items: center; justify-content: center; background: #efefef; border-left: 1px solid #c5c5c5; }
.mark { position: absolute; right: 16px; top: 21px; font-family: "Liberation Sans", "Noto Sans CJK SC", sans-serif; font-size: 18px; letter-spacing: 0; color: #9d9d9d; white-space: nowrap; }

.strip { height: 5px; margin-left: 8px; background: #d8d8d8; display: flex; flex: none; }
.s-white { width: 592px; margin-left: 83px; background: #fff; }
.s-orange { width: 72px; margin-left: 682px; background: #f2b27a; }

.redbox { position: absolute; border: 5px solid #ff1a0f; border-radius: 6px; pointer-events: none; }
.rb1 { left: 354px; top: 303px; width: 1636px; height: 56px; }
.rb2 { left: 414px; top: 563px; width: 1038px; height: 38px; }
.blur { position: absolute; border-radius: 16px; }
.b1 { left: 839px; top: 502px; width: 158px; height: 36px; background: linear-gradient(#eaeaea 50%, #dde0e6 50%); }
.b2 { left: 681px; top: 570px; width: 161px; height: 33px; background: linear-gradient(#cfcfcf 68%, #ffc9c9 68%); }
```
